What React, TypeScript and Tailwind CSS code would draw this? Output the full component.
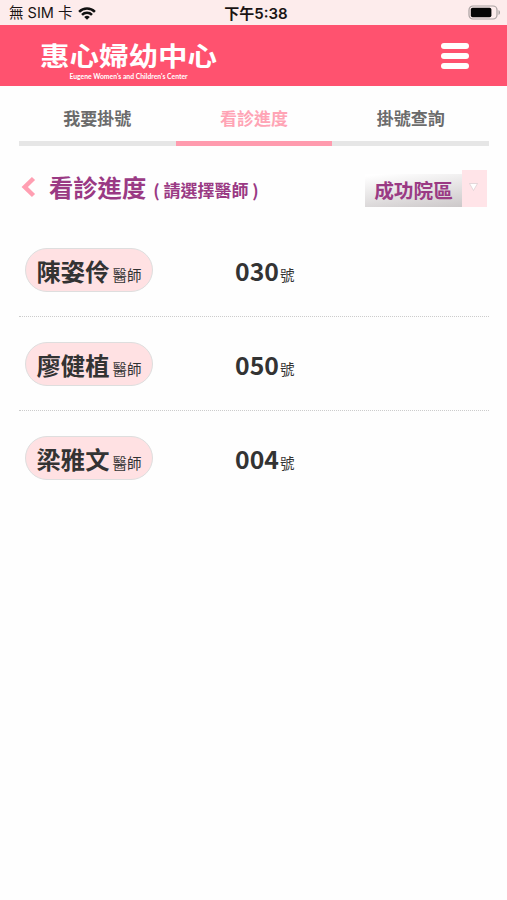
// ============================================================
// ClinicProgress — current number called for each doctor
// ============================================================

interface Doctor {
    name: string;
    number: string;
}

const TABS = ['我要掛號', '看診進度', '掛號查詢'];
const ACTIVE_TAB = '看診進度';

const DOCTORS: Doctor[] = [
    { name: '陳姿伶', number: '030' },
    { name: '廖健植', number: '050' },
    { name: '梁雅文', number: '004' },
];

function WifiIcon() {
    return (
        <svg width="18" height="13" viewBox="0 0 18 13" fill="none" stroke="#111" strokeWidth="2.5">
            <path d="M1.1 4.8a11.2 11.2 0 0 1 15.8 0" />
            <path d="M4 7.9a7 7 0 0 1 10 0" />
            <path d="M9 12.8 6.2 10a4 4 0 0 1 5.6 0z" fill="#111" stroke="none" />
        </svg>
    );
}

function BatteryIcon() {
    return (
        <svg width="33" height="15" viewBox="0 0 33 15">
            <rect x="1" y="1" width="28" height="13" rx="4" fill="none" stroke="#a9a1a1" strokeWidth="1.2" />
            <rect x="2.8" y="2.8" width="20.6" height="9.4" rx="1.8" fill="#050505" />
            <path d="M30.5 5v5c2-.8 2-4.2 0-5z" fill="#a9a1a1" />
        </svg>
    );
}

function StatusBar() {
    return (
        <div className="grid h-[25px] grid-cols-[1fr_auto_1fr] items-center bg-[#fdecec] pl-[9px] pr-[6px] leading-none text-[#1a1414]">
            <div className="flex items-center gap-[6px] pt-[2px]">
                <span className="font-[Inter,'Noto_Sans_CJK_TC',sans-serif] text-[14.5px]">無 SIM 卡</span>
                <WifiIcon />
            </div>
            <span className="pl-[2px] pt-px font-[Inter,'Noto_Sans_CJK_TC',sans-serif] text-[15px] font-semibold">
                下午5:38
            </span>
            <div className="flex justify-end">
                <BatteryIcon />
            </div>
        </div>
    );
}

function Header() {
    return (
        <header className="flex h-[61px] items-start justify-between bg-[#ff526f] pl-10 pr-[38px] text-white">
            <div className="flex w-[177px] flex-col items-center pt-[16px]">
                <h1 className="h-[31px] origin-top scale-y-[.88] whitespace-nowrap text-[29.5px] font-bold leading-[30px]">
                    惠心婦幼中心
                </h1>
                <p className="whitespace-nowrap font-[Lato,sans-serif] text-[6.8px] font-bold leading-[8px]">
                    Eugene Women's and Children's Center
                </p>
            </div>
            <button className="flex flex-col gap-1 pt-[18px]" aria-label="Menu">
                <span className="h-[6px] w-[28px] rounded-full bg-white" />
                <span className="h-[6px] w-[28px] rounded-full bg-white" />
                <span className="h-[6px] w-[28px] rounded-full bg-white" />
            </button>
        </header>
    );
}

export default function App() {
    return (
        <div className="min-h-[900px] w-[507px] bg-[#fefefe] font-['Noto_Sans_CJK_TC',sans-serif] text-[#333]">
            <StatusBar />
            <Header />

            <main className="px-[19px]">
                {/* Tabs */}
                <nav className="grid w-[470px] grid-cols-3">
                    {TABS.map((tab) => (
                        <button
                            key={tab}
                            className={`h-[60px] border-b-[5px] pb-[2px] pt-[10px] text-[17px] font-bold leading-[44px] ${
                                tab === ACTIVE_TAB
                                    ? 'border-[#ff9bae] text-[#ffa4b5]'
                                    : 'border-[#e6e6e6] text-[#6b6b6b]'
                            }`}
                        >
                            {tab}
                        </button>
                    ))}
                </nav>

                {/* Title + branch picker */}
                <div className="flex h-[77px] items-start justify-between pt-[24px]">
                    <div className="flex h-9 items-center text-[#9a3a84]">
                        <svg width="15" height="22" viewBox="0 0 15 22" fill="none" stroke="#ff9fb2" strokeWidth="4.5" className="-mt-[3px] ml-[2px]">
                            <path d="M12.5 2.5 3.8 11l8.7 8.5" />
                        </svg>
                        <h2 className="-mt-[2px] ml-[13px] whitespace-nowrap text-[24.3px] font-bold leading-9">看診進度</h2>
                        <span className="ml-[7px] whitespace-nowrap pt-[3px] text-[17px] font-bold leading-6">
                            ( 請選擇醫師 )
                        </span>
                    </div>
                    <button className="mr-px flex h-[37px] items-end">
                        <span className="h-[33px] w-[97px] bg-linear-172 from-white from-5% to-[#ccc8c9] text-center text-[19.7px] font-bold leading-[31px] text-[#9a3a84]">
                            成功院區
                        </span>
                        <span className="flex h-[37px] w-[25px] justify-center bg-[#ffe4e8] pr-[3px] pt-[12px]">
                            <svg width="11" height="11" viewBox="0 0 11 11">
                                <path d="M1.5 1.5h8l-4 7z" fill="#fff" stroke="#d8ccce" strokeWidth=".7" />
                            </svg>
                        </span>
                    </button>
                </div>

                {/* Doctors */}
                <ul className="w-[470px]">
                    {DOCTORS.map((doctor) => (
                        <li
                            key={doctor.name}
                            className="flex h-[94px] items-center border-b border-dotted border-[#ccc] last:border-transparent"
                        >
                            <div className="ml-[6px] flex h-11 w-[128px] items-baseline justify-center whitespace-nowrap rounded-full border border-[#dedede] bg-[#ffe1e3] leading-[43px]">
                                <span className="text-[24.3px] font-bold">{doctor.name}</span>
                                <span className="ml-[3px] text-[14.5px]">醫師</span>
                            </div>
                            <div className="ml-[82px] flex items-baseline pt-[5px] leading-[45px]">
                                <span className="text-[24.8px] font-bold">{doctor.number}</span>
                                <span className="ml-[1px] text-[14.5px]">號</span>
                            </div>
                        </li>
                    ))}
                </ul>
            </main>
        </div>
    );
}
